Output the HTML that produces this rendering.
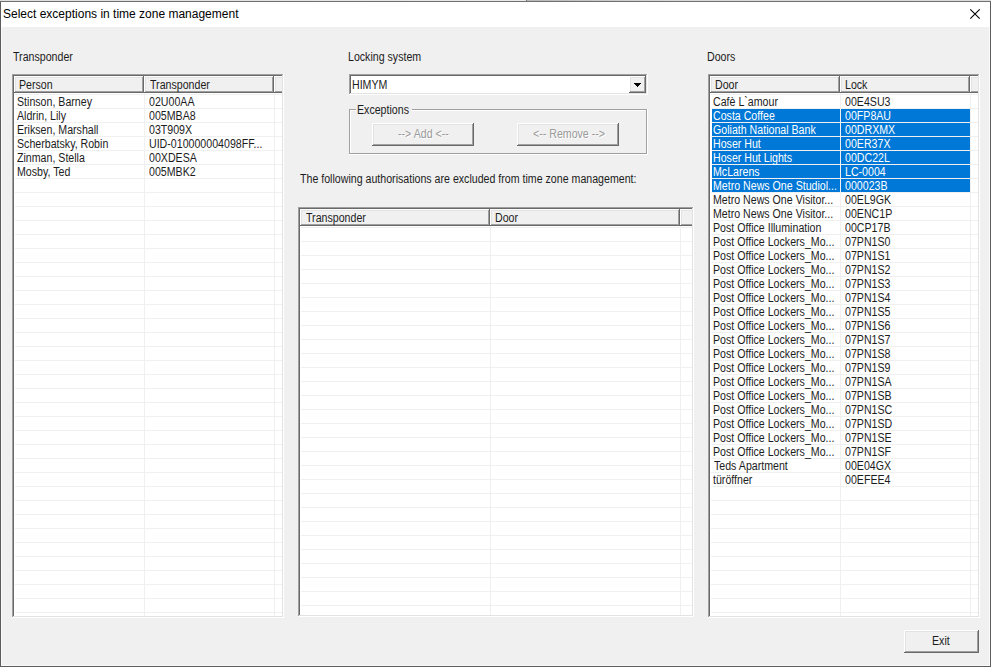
<!DOCTYPE html><html><head><meta charset="utf-8"><style>
*{box-sizing:border-box}
html,body{margin:0;padding:0}
body{width:991px;height:667px;position:relative;overflow:hidden;background:#e6e6e6;font-family:"Liberation Sans",sans-serif}
div{position:absolute}
.t{font:12px/14px "Liberation Sans",sans-serif;color:#1c1c1c;white-space:nowrap;transform:scaleX(0.885);transform-origin:0 0}
.t.w{color:#fff}
.t.dis{color:#9a9a9a;text-shadow:1px 1px 0 #fff}
.title{font:12px/14px "Liberation Sans",sans-serif;color:#000;white-space:nowrap}
.sk{box-shadow:inset -1px -1px 0 #fff,inset 1px 1px 0 #a0a0a0,inset -2px -2px 0 #e3e3e3,inset 2px 2px 0 #696969}
.rz{background:#f0f0f0;box-shadow:inset -1px -1px 0 #696969,inset 1px 1px 0 #fff,inset -2px -2px 0 #a0a0a0,inset 2px 2px 0 #e3e3e3}
.rz.nr{box-shadow:inset 0 -1px 0 #696969,inset 1px 1px 0 #fff,inset 0 -2px 0 #a0a0a0,inset 2px 2px 0 #e3e3e3}
.clip{overflow:hidden}
.gh{height:1px;background:#f0f0f0}
.gv{width:1px;background:#f0f0f0}
.sel{background:#0078d7}
</style></head><body>
<div style="left:0;top:0;width:526px;height:1px;background:linear-gradient(90deg,#dedede,#e8e8e8)"></div>
<div style="left:526px;top:0;width:1px;height:1px;background:#777"></div>
<div style="left:527px;top:0;width:464px;height:1px;background:linear-gradient(90deg,#b8b8b8,#d8d8d8 30%,#dcdcdc)"></div>
<div style="left:0;top:1px;width:991px;height:666px;background:#5c5c5c"></div>
<div style="left:0;top:1px;width:991px;height:1px;background:#707070"></div>
<div style="left:1px;top:2px;width:989px;height:25px;background:#fff"></div>
<div style="left:1px;top:27px;width:989px;height:639px;background:#f0f0f0;border-left:1px solid #fafafa;border-right:1px solid #fafafa;border-bottom:1px solid #fafafa"></div>
<div class="title" style="left:3px;top:7px">Select exceptions in time zone management</div>
<svg style="position:absolute;left:969px;top:8px" width="13" height="13" viewBox="0 0 13 13"><path d="M1.3 1.3L10.7 10.7M10.7 1.3L1.3 10.7" stroke="#000" stroke-width="1.1" fill="none"/></svg>
<div class="t " style="left:13px;top:50px;">Transponder</div>
<div class="t " style="left:348px;top:50px;">Locking system</div>
<div class="t " style="left:707px;top:50px;">Doors</div>
<div class="sk" style="left:12px;top:74px;width:272px;height:544px;background:#fff"></div>
<div class="rz" style="left:14px;top:76px;width:130px;height:17px;"></div>
<div class="t " style="left:19px;top:78px;">Person</div>
<div class="rz" style="left:144px;top:76px;width:130px;height:17px;"></div>
<div class="t " style="left:150px;top:78px;">Transponder</div>
<div class="rz nr" style="left:274px;top:76px;width:8px;height:17px"></div>
<div class="clip" style="left:14px;top:93px;width:268px;height:523px"><div class="gh" style="left:1px;top:1px;width:267px"></div><div class="gh" style="left:1px;top:15px;width:267px"></div><div class="gh" style="left:1px;top:29px;width:267px"></div><div class="gh" style="left:1px;top:43px;width:267px"></div><div class="gh" style="left:1px;top:57px;width:267px"></div><div class="gh" style="left:1px;top:71px;width:267px"></div><div class="gh" style="left:1px;top:85px;width:267px"></div><div class="gh" style="left:1px;top:99px;width:267px"></div><div class="gh" style="left:1px;top:113px;width:267px"></div><div class="gh" style="left:1px;top:127px;width:267px"></div><div class="gh" style="left:1px;top:141px;width:267px"></div><div class="gh" style="left:1px;top:155px;width:267px"></div><div class="gh" style="left:1px;top:169px;width:267px"></div><div class="gh" style="left:1px;top:183px;width:267px"></div><div class="gh" style="left:1px;top:197px;width:267px"></div><div class="gh" style="left:1px;top:211px;width:267px"></div><div class="gh" style="left:1px;top:225px;width:267px"></div><div class="gh" style="left:1px;top:239px;width:267px"></div><div class="gh" style="left:1px;top:253px;width:267px"></div><div class="gh" style="left:1px;top:267px;width:267px"></div><div class="gh" style="left:1px;top:281px;width:267px"></div><div class="gh" style="left:1px;top:295px;width:267px"></div><div class="gh" style="left:1px;top:309px;width:267px"></div><div class="gh" style="left:1px;top:323px;width:267px"></div><div class="gh" style="left:1px;top:337px;width:267px"></div><div class="gh" style="left:1px;top:351px;width:267px"></div><div class="gh" style="left:1px;top:365px;width:267px"></div><div class="gh" style="left:1px;top:379px;width:267px"></div><div class="gh" style="left:1px;top:393px;width:267px"></div><div class="gh" style="left:1px;top:407px;width:267px"></div><div class="gh" style="left:1px;top:421px;width:267px"></div><div class="gh" style="left:1px;top:435px;width:267px"></div><div class="gh" style="left:1px;top:449px;width:267px"></div><div class="gh" style="left:1px;top:463px;width:267px"></div><div class="gh" style="left:1px;top:477px;width:267px"></div><div class="gh" style="left:1px;top:491px;width:267px"></div><div class="gh" style="left:1px;top:505px;width:267px"></div><div class="gh" style="left:1px;top:519px;width:267px"></div><div class="gv" style="left:130px;top:0;height:523px"></div><div class="gv" style="left:260px;top:0;height:523px"></div><div class="t " style="left:3px;top:2px;">Stinson, Barney</div>
<div class="t " style="left:135px;top:2px;">02U00AA</div>
<div class="t " style="left:3px;top:16px;">Aldrin, Lily</div>
<div class="t " style="left:135px;top:16px;">005MBA8</div>
<div class="t " style="left:3px;top:30px;">Eriksen, Marshall</div>
<div class="t " style="left:135px;top:30px;">03T909X</div>
<div class="t " style="left:3px;top:44px;">Scherbatsky, Robin</div>
<div class="t " style="left:135px;top:44px;">UID-010000004098FF...</div>
<div class="t " style="left:3px;top:58px;">Zinman, Stella</div>
<div class="t " style="left:135px;top:58px;">00XDESA</div>
<div class="t " style="left:3px;top:72px;">Mosby, Ted</div>
<div class="t " style="left:135px;top:72px;">005MBK2</div>
</div>
<div class="sk" style="left:349px;top:74px;width:299px;height:21px;background:#fff"></div>
<div class="t " style="left:352px;top:78px;">HIMYM</div>
<div class="rz" style="left:629px;top:76px;width:17px;height:17px;"></div>
<svg style="position:absolute;left:634px;top:83px" width="7" height="4" viewBox="0 0 7 4"><path d="M0 0H7V1H6V2H5V3H4V4H3V3H2V2H1V1H0Z" fill="#000"/></svg>
<div style="left:349px;top:109px;width:299px;height:46px;box-shadow:inset -1px -1px 0 #fff,inset 1px 1px 0 #a0a0a0,inset -2px -2px 0 #a0a0a0,inset 2px 2px 0 #fff"></div>
<div style="left:356px;top:108px;width:56px;height:4px;background:#f0f0f0"></div>
<div class="t " style="left:357px;top:103px;">Exceptions</div>
<div class="rz" style="left:372px;top:123px;width:102px;height:23px;"></div>
<div class="t dis" style="left:398px;top:127px;">--&gt; Add &lt;--</div>
<div class="rz" style="left:517px;top:123px;width:102px;height:23px;"></div>
<div class="t dis" style="left:533px;top:127px;">&lt;-- Remove --&gt;</div>
<div class="t " style="left:300px;top:172px;">The following authorisations are excluded from time zone management:</div>
<div class="sk" style="left:298px;top:207px;width:396px;height:410px;background:#fff"></div>
<div class="rz" style="left:300px;top:209px;width:190px;height:17px;"></div>
<div class="t " style="left:306px;top:211px;">Transponder</div>
<div class="rz" style="left:490px;top:209px;width:190px;height:17px;"></div>
<div class="t " style="left:495px;top:211px;">Door</div>
<div class="rz nr" style="left:680px;top:209px;width:12px;height:17px"></div>
<div class="clip" style="left:300px;top:226px;width:392px;height:389px"><div class="gh" style="left:1px;top:1px;width:391px"></div><div class="gh" style="left:1px;top:15px;width:391px"></div><div class="gh" style="left:1px;top:29px;width:391px"></div><div class="gh" style="left:1px;top:43px;width:391px"></div><div class="gh" style="left:1px;top:57px;width:391px"></div><div class="gh" style="left:1px;top:71px;width:391px"></div><div class="gh" style="left:1px;top:85px;width:391px"></div><div class="gh" style="left:1px;top:99px;width:391px"></div><div class="gh" style="left:1px;top:113px;width:391px"></div><div class="gh" style="left:1px;top:127px;width:391px"></div><div class="gh" style="left:1px;top:141px;width:391px"></div><div class="gh" style="left:1px;top:155px;width:391px"></div><div class="gh" style="left:1px;top:169px;width:391px"></div><div class="gh" style="left:1px;top:183px;width:391px"></div><div class="gh" style="left:1px;top:197px;width:391px"></div><div class="gh" style="left:1px;top:211px;width:391px"></div><div class="gh" style="left:1px;top:225px;width:391px"></div><div class="gh" style="left:1px;top:239px;width:391px"></div><div class="gh" style="left:1px;top:253px;width:391px"></div><div class="gh" style="left:1px;top:267px;width:391px"></div><div class="gh" style="left:1px;top:281px;width:391px"></div><div class="gh" style="left:1px;top:295px;width:391px"></div><div class="gh" style="left:1px;top:309px;width:391px"></div><div class="gh" style="left:1px;top:323px;width:391px"></div><div class="gh" style="left:1px;top:337px;width:391px"></div><div class="gh" style="left:1px;top:351px;width:391px"></div><div class="gh" style="left:1px;top:365px;width:391px"></div><div class="gh" style="left:1px;top:379px;width:391px"></div><div class="gv" style="left:190px;top:0;height:389px"></div><div class="gv" style="left:380px;top:0;height:389px"></div></div>
<div class="sk" style="left:708px;top:74px;width:272px;height:544px;background:#fff"></div>
<div class="rz" style="left:710px;top:76px;width:130px;height:17px;"></div>
<div class="t " style="left:715px;top:78px;">Door</div>
<div class="rz" style="left:840px;top:76px;width:130px;height:17px;"></div>
<div class="t " style="left:845px;top:78px;">Lock</div>
<div class="rz nr" style="left:970px;top:76px;width:8px;height:17px"></div>
<div class="clip" style="left:710px;top:93px;width:268px;height:523px"><div class="gh" style="left:1px;top:1px;width:267px"></div><div class="gh" style="left:1px;top:15px;width:267px"></div><div class="gh" style="left:1px;top:29px;width:267px"></div><div class="gh" style="left:1px;top:43px;width:267px"></div><div class="gh" style="left:1px;top:57px;width:267px"></div><div class="gh" style="left:1px;top:71px;width:267px"></div><div class="gh" style="left:1px;top:85px;width:267px"></div><div class="gh" style="left:1px;top:99px;width:267px"></div><div class="gh" style="left:1px;top:113px;width:267px"></div><div class="gh" style="left:1px;top:127px;width:267px"></div><div class="gh" style="left:1px;top:141px;width:267px"></div><div class="gh" style="left:1px;top:155px;width:267px"></div><div class="gh" style="left:1px;top:169px;width:267px"></div><div class="gh" style="left:1px;top:183px;width:267px"></div><div class="gh" style="left:1px;top:197px;width:267px"></div><div class="gh" style="left:1px;top:211px;width:267px"></div><div class="gh" style="left:1px;top:225px;width:267px"></div><div class="gh" style="left:1px;top:239px;width:267px"></div><div class="gh" style="left:1px;top:253px;width:267px"></div><div class="gh" style="left:1px;top:267px;width:267px"></div><div class="gh" style="left:1px;top:281px;width:267px"></div><div class="gh" style="left:1px;top:295px;width:267px"></div><div class="gh" style="left:1px;top:309px;width:267px"></div><div class="gh" style="left:1px;top:323px;width:267px"></div><div class="gh" style="left:1px;top:337px;width:267px"></div><div class="gh" style="left:1px;top:351px;width:267px"></div><div class="gh" style="left:1px;top:365px;width:267px"></div><div class="gh" style="left:1px;top:379px;width:267px"></div><div class="gh" style="left:1px;top:393px;width:267px"></div><div class="gh" style="left:1px;top:407px;width:267px"></div><div class="gh" style="left:1px;top:421px;width:267px"></div><div class="gh" style="left:1px;top:435px;width:267px"></div><div class="gh" style="left:1px;top:449px;width:267px"></div><div class="gh" style="left:1px;top:463px;width:267px"></div><div class="gh" style="left:1px;top:477px;width:267px"></div><div class="gh" style="left:1px;top:491px;width:267px"></div><div class="gh" style="left:1px;top:505px;width:267px"></div><div class="gh" style="left:1px;top:519px;width:267px"></div><div class="gv" style="left:130px;top:0;height:523px"></div><div class="gv" style="left:260px;top:0;height:523px"></div><div class="t " style="left:3px;top:2px;">Caf&egrave; L`amour</div>
<div class="t " style="left:135px;top:2px;">00E4SU3</div>
<div class="sel" style="left:2px;top:16px;width:128px;height:13px"></div><div class="sel" style="left:131px;top:16px;width:129px;height:13px"></div><div class="t w" style="left:3px;top:16px;">Costa Coffee</div>
<div class="t w" style="left:135px;top:16px;">00FP8AU</div>
<div class="sel" style="left:2px;top:30px;width:128px;height:13px"></div><div class="sel" style="left:131px;top:30px;width:129px;height:13px"></div><div class="t w" style="left:3px;top:30px;">Goliath National Bank</div>
<div class="t w" style="left:135px;top:30px;">00DRXMX</div>
<div class="sel" style="left:2px;top:44px;width:128px;height:13px"></div><div class="sel" style="left:131px;top:44px;width:129px;height:13px"></div><div class="t w" style="left:3px;top:44px;">Hoser Hut</div>
<div class="t w" style="left:135px;top:44px;">00ER37X</div>
<div class="sel" style="left:2px;top:58px;width:128px;height:13px"></div><div class="sel" style="left:131px;top:58px;width:129px;height:13px"></div><div class="t w" style="left:3px;top:58px;">Hoser Hut Lights</div>
<div class="t w" style="left:135px;top:58px;">00DC22L</div>
<div class="sel" style="left:2px;top:72px;width:128px;height:13px"></div><div class="sel" style="left:131px;top:72px;width:129px;height:13px"></div><div class="t w" style="left:3px;top:72px;">McLarens</div>
<div class="t w" style="left:135px;top:72px;">LC-0004</div>
<div class="sel" style="left:2px;top:86px;width:128px;height:13px"></div><div class="sel" style="left:131px;top:86px;width:129px;height:13px"></div><div class="t w" style="left:3px;top:86px;">Metro News One Studiol...</div>
<div class="t w" style="left:135px;top:86px;">000023B</div>
<div class="t " style="left:3px;top:100px;">Metro News One Visitor...</div>
<div class="t " style="left:135px;top:100px;">00EL9GK</div>
<div class="t " style="left:3px;top:114px;">Metro News One Visitor...</div>
<div class="t " style="left:135px;top:114px;">00ENC1P</div>
<div class="t " style="left:3px;top:128px;">Post Office Illumination</div>
<div class="t " style="left:135px;top:128px;">00CP17B</div>
<div class="t " style="left:3px;top:142px;">Post Office Lockers_Mo...</div>
<div class="t " style="left:135px;top:142px;">07PN1S0</div>
<div class="t " style="left:3px;top:156px;">Post Office Lockers_Mo...</div>
<div class="t " style="left:135px;top:156px;">07PN1S1</div>
<div class="t " style="left:3px;top:170px;">Post Office Lockers_Mo...</div>
<div class="t " style="left:135px;top:170px;">07PN1S2</div>
<div class="t " style="left:3px;top:184px;">Post Office Lockers_Mo...</div>
<div class="t " style="left:135px;top:184px;">07PN1S3</div>
<div class="t " style="left:3px;top:198px;">Post Office Lockers_Mo...</div>
<div class="t " style="left:135px;top:198px;">07PN1S4</div>
<div class="t " style="left:3px;top:212px;">Post Office Lockers_Mo...</div>
<div class="t " style="left:135px;top:212px;">07PN1S5</div>
<div class="t " style="left:3px;top:226px;">Post Office Lockers_Mo...</div>
<div class="t " style="left:135px;top:226px;">07PN1S6</div>
<div class="t " style="left:3px;top:240px;">Post Office Lockers_Mo...</div>
<div class="t " style="left:135px;top:240px;">07PN1S7</div>
<div class="t " style="left:3px;top:254px;">Post Office Lockers_Mo...</div>
<div class="t " style="left:135px;top:254px;">07PN1S8</div>
<div class="t " style="left:3px;top:268px;">Post Office Lockers_Mo...</div>
<div class="t " style="left:135px;top:268px;">07PN1S9</div>
<div class="t " style="left:3px;top:282px;">Post Office Lockers_Mo...</div>
<div class="t " style="left:135px;top:282px;">07PN1SA</div>
<div class="t " style="left:3px;top:296px;">Post Office Lockers_Mo...</div>
<div class="t " style="left:135px;top:296px;">07PN1SB</div>
<div class="t " style="left:3px;top:310px;">Post Office Lockers_Mo...</div>
<div class="t " style="left:135px;top:310px;">07PN1SC</div>
<div class="t " style="left:3px;top:324px;">Post Office Lockers_Mo...</div>
<div class="t " style="left:135px;top:324px;">07PN1SD</div>
<div class="t " style="left:3px;top:338px;">Post Office Lockers_Mo...</div>
<div class="t " style="left:135px;top:338px;">07PN1SE</div>
<div class="t " style="left:3px;top:352px;">Post Office Lockers_Mo...</div>
<div class="t " style="left:135px;top:352px;">07PN1SF</div>
<div class="t " style="left:4px;top:366px;">Teds Apartment</div>
<div class="t " style="left:135px;top:366px;">00E04GX</div>
<div class="t " style="left:3px;top:380px;">t&uuml;r&ouml;ffner</div>
<div class="t " style="left:135px;top:380px;">00EFEE4</div>
</div>
<div class="rz" style="left:904px;top:630px;width:75px;height:23px;"></div>
<div class="t " style="left:932px;top:634px;">Exit</div>
</body></html>
